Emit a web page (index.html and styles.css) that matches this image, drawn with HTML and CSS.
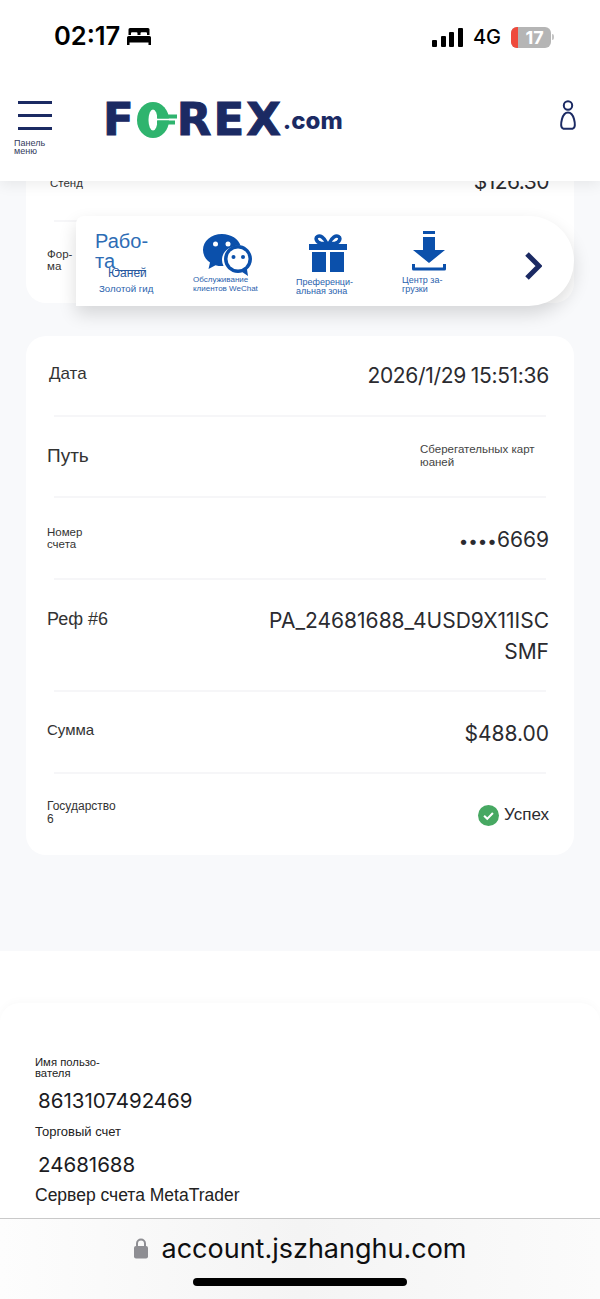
FILE: index.html
```html
<!DOCTYPE html>
<html lang="ru">
<head>
    <meta charset="UTF-8">
    <meta name="viewport" content="width=device-width, initial-scale=1.0">
    <title>FOREX.com</title>
    <link rel="stylesheet" href="styles.css">
</head>
<body>
    <!-- Status bar -->
    <div class="status-bar">
        <div class="status-left">
            <span class="clock">02:17</span>
            <svg class="bed" viewBox="0 0 24 17" width="24" height="17">
                <path fill="#000" d="M3 0h18a1.500 1.500 0 0 1 1.500 1.500V7H20V5.200a1 1 0 0 0-1-1h-4.500a1 1 0 0 0-1 1V7h-3V5.200a1 1 0 0 0-1-1H5a1 1 0 0 0-1 1V7H1.500V1.500A1.500 1.500 0 0 1 3 0zM1.500 8h21A1.500 1.500 0 0 1 24 9.500V17h-2.500v-2.500h-19V17H0V9.500A1.500 1.500 0 0 1 1.500 8z"/>
            </svg>
        </div>
        <div class="status-right">
            <div class="signal"><i></i><i></i><i></i><i></i></div>
            <span class="net">4G</span>
            <div class="battery"><span class="battery-low"></span><span class="battery-num">17</span></div>
            <span class="battery-cap"></span>
        </div>
    </div>

    <!-- Site header -->
    <header class="site-header">
        <div class="menu">
            <div class="burger"><i></i><i></i><i></i></div>
            <span class="menu-label">Панель меню</span>
        </div>
        <div class="logo">
            <span class="logo-text">F</span>
            <svg class="logo-o" viewBox="0 0 40 36" width="40" height="36">
                <ellipse cx="16" cy="18" rx="16" ry="18" fill="#2fb46e"/>
                <ellipse cx="16" cy="18" rx="4.500" ry="10.500" fill="#fff"/>
                <rect x="20" y="16.500" width="13" height="2" fill="#fff"/>
                <rect x="20" y="12.500" width="20" height="4" fill="#2fb46e"/>
                <rect x="20" y="18.500" width="18" height="4" fill="#2fb46e"/>
            </svg>
            <span class="logo-text">REX</span>
            <span class="logo-com">.com</span>
        </div>
        <svg class="user" viewBox="0 0 20 30" width="20" height="30">
            <circle cx="10" cy="5.500" r="4.200" fill="none" stroke="#1b2a63" stroke-width="2"/>
            <path fill="none" stroke="#1b2a63" stroke-width="2" d="M10 12.500c3.500 0 5 3 6 6.500 1.200 4.500 1.500 9-1.500 9.700h-9C2.500 28 2.800 23.500 4 19c1-3.500 2.500-6.500 6-6.500z"/>
        </svg>
    </header>

    <main class="content">
        <!-- Card scrolled under the header -->
        <section class="card card-top">
            <div class="row row-stand">
                <span class="label-sm">Стенд</span>
                <span class="value">$126.30</span>
            </div>
            <div class="row row-form">
                <span class="label-sm form-label">Фор-<br>ма</span>
            </div>
        </section>

        <!-- Floating shortcuts -->
        <nav class="quick-bar">
            <div class="quick-item quick-gold">
                <span class="gold-big">Рабо-<br>та</span>
                <span class="gold-sub">Юаней</span>
                <span class="gold-name">Золотой гид</span>
            </div>
            <div class="quick-item quick-wechat">
                <svg viewBox="0 0 50 44" width="50" height="44">
                    <path fill="#0b50ab" d="M20 1C9 1 1 8.300 1 17c0 5 2.600 9.400 7 12.500L6.500 36l7-3.800c2 .6 4.200.9 6.500.9h1.500C20.500 31 20 29 20 27c0-8.500 7.500-14.500 17-14.500h1.500C36.500 6 29 1 20 1z"/>
                    <path fill="#0b50ab" d="M36 12c-7.500 0-14 6.300-14 14s6.500 14 14 14c1.500 0 3-.2 4.500-.7L46 43l-1-6.500c3-2.500 5-6.300 5-10.500 0-7.700-6.500-14-14-14z"/>
                    <ellipse fill="#fff" cx="36" cy="26" rx="10.500" ry="10.500"/>
                    <circle fill="#fff" cx="13.500" cy="11" r="2.500"/>
                    <circle fill="#fff" cx="26" cy="11" r="2.500"/>
                    <circle fill="#0b50ab" cx="31.500" cy="24" r="2"/>
                    <circle fill="#0b50ab" cx="41" cy="24" r="2"/>
                </svg>
                <span class="quick-label">Обслуживание клиентов WeChat</span>
            </div>
            <div class="quick-item quick-gift">
                <svg viewBox="0 0 38 38" width="38" height="38">
                    <path fill="none" stroke="#0b50ab" stroke-width="3.500" d="M18 9.500C15 3 11 1 8.500 2.500 6 4 7 8 12 9.500zM20 9.500c3-6.500 7-8.500 9.500-7C32 4 31 8 26 9.500z"/>
                    <rect fill="#0b50ab" x="0" y="10" width="38" height="6"/>
                    <rect fill="#0b50ab" x="3" y="18" width="14" height="20"/>
                    <rect fill="#0b50ab" x="21" y="18" width="14" height="20"/>
                </svg>
                <span class="quick-label">Преференци-<br>альная зона</span>
            </div>
            <div class="quick-item quick-download">
                <svg viewBox="0 0 34 40" width="34" height="40">
                    <rect fill="#0b50ab" x="11" y="0" width="12" height="3"/>
                    <path fill="#0b50ab" d="M11 6h12v13h10L17 32 1 19h10z"/>
                    <path fill="none" stroke="#0b50ab" stroke-width="3" stroke-linejoin="round" d="M1.500 33v5h31v-5"/>
                </svg>
                <span class="quick-label">Центр за-<br>грузки</span>
            </div>
            <svg class="quick-next" viewBox="0 0 18 28" width="18" height="28">
                <path fill="none" stroke="#1b2a63" stroke-width="5" d="M3 2l12 12L3 26"/>
            </svg>
        </nav>

        <!-- Transaction details -->
        <section class="card card-details">
            <div class="row row-date">
                <span class="label-lg">Дата</span>
                <span class="value value-date">2026/1/29 15:51:36</span>
            </div>
            <div class="row row-path">
                <span class="label-xl">Путь</span>
                <span class="path-value">Сберегательных карт<br>юаней</span>
            </div>
            <div class="row row-account">
                <span class="label-sm">Номер<br>счета</span>
                <span class="value"><span class="dots">••••</span>6669</span>
            </div>
            <div class="row row-ref">
                <span class="label-lg">Реф #6</span>
                <span class="value">PA_24681688_4USD9X11ISC<br>SMF</span>
            </div>
            <div class="row row-sum">
                <span class="label-md">Сумма</span>
                <span class="value">$488.00</span>
            </div>
            <div class="row row-state">
                <span class="label-sm">Государство<br>6</span>
                <span class="state">
                    <svg viewBox="0 0 20 20" width="21" height="21">
                        <circle cx="10" cy="10" r="10" fill="#47a862"/>
                        <path fill="none" stroke="#fff" stroke-width="2" d="M5.800 10.300l3 2.900 5.400-5.600"/>
                    </svg>
                    Успех
                </span>
            </div>
        </section>
    </main>

    <!-- Account info -->
    <section class="account">
        <div class="account-card">
            <div class="acc-label">Имя пользо-<br>вателя</div>
            <div class="acc-value">8613107492469</div>
            <div class="acc-label acc-label-trade">Торговый счет</div>
            <div class="acc-value acc-value-trade">24681688</div>
            <div class="acc-server">Сервер счета MetaTrader</div>
        </div>
    </section>

    <!-- Browser address bar -->
    <footer class="url-bar">
        <div class="url">
            <svg viewBox="0 0 15 22" width="16" height="22">
                <path fill="none" stroke="#8e8e93" stroke-width="2" d="M3.500 10V6.500a4 4 0 0 1 8 0V10"/>
                <rect x="0.500" y="9" width="14" height="12.500" rx="2" fill="#8e8e93"/>
            </svg>
            <span>account.jszhanghu.com</span>
        </div>
        <div class="home-bar"></div>
    </footer>
</body>
</html>
```

FILE: styles.css
```css
:root {
    --navy: #1b2a63;
    --blue: #2a62ad;
    --page: #f8f9fb;
    --text: #2b2b30;
    --line: #f6f6f8;
}

* {
    margin: 0;
    padding: 0;
    box-sizing: border-box;
}

html, body {
    height: 1299px;
    overflow: hidden;
}

body {
    width: 600px;
    background: white;
    color: var(--text);
    font-family: 'Liberation Sans', Arial, sans-serif;
    display: flex;
    flex-direction: column;
}

/* status bar */
.status-bar {
    height: 72px;
    flex: none;
    display: flex;
    justify-content: space-between;
    align-items: flex-start;
    padding: 20px 46px 0 54px;
    background: white;
    color: black;
    position: relative;
    z-index: 3;
}

.status-left {
    display: flex;
    align-items: center;
    gap: 7px;
}

.clock {
    font-family: Inter, sans-serif;
    font-size: 25.500px;
    font-weight: 600;
    line-height: 32px;
}

.status-right {
    display: flex;
    align-items: center;
    height: 32px;
    margin-top: 1px;
}

.signal {
    display: flex;
    align-items: flex-end;
    gap: 3.500px;
    height: 19px;
    margin-right: 10px;
}

.signal i {
    display: block;
    width: 5px;
    border-radius: 1px;
    background: black;
}

.signal i:nth-child(1) { height: 7px; }
.signal i:nth-child(2) { height: 11px; }
.signal i:nth-child(3) { height: 15px; }
.signal i:nth-child(4) { height: 19px; }

.net {
    font-family: Inter, sans-serif;
    font-size: 20px;
    font-weight: 500;
    margin-right: 10px;
}

.battery {
    width: 40px;
    height: 21px;
    border-radius: 6px;
    background: #b5b5b5;
    overflow: hidden;
    display: flex;
}

.battery-low {
    width: 7px;
    background: #ef4a3c;
}

.battery-num {
    flex: 1;
    text-align: center;
    color: white;
    font-family: Inter, sans-serif;
    font-size: 18px;
    font-weight: 700;
    line-height: 21px;
}

.battery-cap {
    width: 2px;
    height: 6px;
    margin-left: 1px;
    border-radius: 0 2px 2px 0;
    background: #c4c4c4;
}

/* header */
.site-header {
    height: 109px;
    flex: none;
    background: white;
    box-shadow: 0 3px 14px rgba(0, 0, 0, 0.08);
    display: flex;
    align-items: flex-start;
    position: relative;
    z-index: 2;
}

.menu {
    width: 103px;
    flex: none;
    padding: 29px 0 0 14px;
}

.burger {
    width: 34px;
    margin-left: 4px;
    display: flex;
    flex-direction: column;
    gap: 10px;
}

.burger i {
    display: block;
    height: 3px;
    background: var(--navy);
}

.menu-label {
    display: block;
    width: 40px;
    margin-top: 10px;
    font-size: 9px;
    line-height: 7.500px;
    color: #333a5c;
}

.logo {
    display: flex;
    align-items: center;
    height: 36px;
    margin-top: 30px;
    color: var(--navy);
}

.logo-text {
    font-family: 'DejaVu Sans', sans-serif;
    font-size: 45px;
    font-weight: 700;
    line-height: 36px;
    letter-spacing: 2px;
    -webkit-text-stroke: 1px var(--navy);
}

.logo-o {
    margin: 0 0 0 1px;
}

.logo-com {
    font-family: Inter, sans-serif;
    font-size: 24px;
    font-weight: 800;
}

.user {
    margin: 28px 22px 0 auto;
}

/* main content */
.content {
    height: 770px;
    flex: none;
    background: var(--page);
    padding: 0 26px;
    position: relative;
    overflow: hidden;
}

.card {
    background: white;
    border-radius: 20px;
}

.row {
    display: flex;
    justify-content: space-between;
    align-items: center;
    position: relative;
    padding: 0 25px 0 21px;
}

.row + .row::before {
    content: "";
    position: absolute;
    top: 0;
    left: 28px;
    right: 28px;
    height: 2px;
    background: var(--line);
}

.card-top {
    height: 152px;
    margin-top: -30px;
    margin-bottom: 33px;
}

.row-stand {
    height: 69px;
    padding-top: 12px;
    padding-left: 24px;
    align-items: flex-start;
}

.row-stand .label-sm {
    margin-top: 14px;
}

.row-stand .value {
    margin-top: 3px;
    letter-spacing: -0.500px;
}

.row-form {
    height: 83px;
    padding-bottom: 4px;
}

.form-label {
    line-height: 12px;
}

.card-details {
    height: 519px;
}

.label-sm {
    font-size: 11.500px;
    line-height: 12px;
    color: #333;
}

.label-md {
    font-size: 15px;
    color: #333;
}

.label-lg {
    font-size: 17px;
    color: #333;
}

.label-xl {
    font-size: 19px;
    color: #333;
}

.value {
    font-family: Inter, sans-serif;
    font-size: 21px;
    line-height: 31px;
    text-align: right;
    color: var(--text);
}

.value-date {
    letter-spacing: -0.300px;
    word-spacing: -1px;
}

.dots {
    font-size: 17px;
}

.row-date { height: 79px; padding-left: 23px; }
.row-date .label-lg { margin-top: -3px; }

.row-path { height: 81px; }
.row-account { height: 82px; padding-top: 2px; }
.row-account .value { margin-top: 4px; }

.row-ref { height: 112px; padding-top: 2px; align-items: flex-start; }
.row-ref .label-lg { margin-top: 29px; font-size: 18px; }
.row-ref .value { margin-top: 25px; }

.row-sum { height: 82px; padding-top: 5px; }
.row-sum .label-md { margin-top: -9px; }

.row-state { height: 83px; padding-top: 3px; }
.row-state .label-sm { font-size: 12px; line-height: 13px; margin-top: -4px; }

.path-value {
    width: 129px;
    padding-top: 1px;
    font-size: 11.500px;
    line-height: 13px;
    color: #444;
}

.state {
    display: flex;
    align-items: center;
    gap: 5px;
    font-size: 17px;
}

/* floating shortcuts */
.quick-bar {
    position: absolute;
    top: 35px;
    left: 76px;
    width: 498px;
    height: 90px;
    background: white;
    border-radius: 8px 45px 45px 0;
    box-shadow: 0 8px 18px rgba(0, 0, 0, 0.14);
    display: flex;
    align-items: flex-start;
    z-index: 1;
}

.quick-item {
    display: flex;
    flex-direction: column;
    color: var(--blue);
}

.quick-label {
    display: block;
    font-size: 9px;
    line-height: 9px;
}

.quick-gold {
    width: 97px;
    padding: 15px 0 0 19px;
}

.gold-big {
    font-size: 20px;
    line-height: 20px;
    color: #2d6cb5;
}

/* the line over the word sits tight on the letters, overline is too high */
.gold-sub {
    align-self: flex-start;
    margin: -4px 0 0 13px;
    font-size: 12px;
    line-height: 13px;
    background: linear-gradient(#2a5aa0, #2a5aa0) no-repeat 7px 3px / 31px 1px;
    color: #2a5aa0;
}

.gold-name {
    margin: 3px 0 0 4px;
    font-size: 9.700px;
    line-height: 12px;
    white-space: nowrap;
}

.quick-wechat {
    width: 103px;
    margin-left: 20px;
    padding-top: 17px;
}

.quick-wechat svg {
    margin-left: 9px;
}

.quick-wechat .quick-label {
    font-size: 8px;
    width: 70px;
    margin-top: -2px;
}

.quick-gift {
    width: 106px;
    padding-top: 18px;
}

.quick-gift svg {
    margin-left: 13px;
}

.quick-gift .quick-label {
    margin-top: 6px;
}

.quick-download {
    width: 122px;
    padding-top: 15px;
}

.quick-download svg {
    margin-left: 10px;
}

.quick-download .quick-label {
    margin-top: 5px;
    line-height: 8.500px;
}

.quick-next {
    margin-top: 36px;
    flex: none;
}

/* account info */
.account {
    flex: 1;
    min-height: 0;
    padding-top: 52px;
    overflow: hidden;
}

.account-card {
    height: 240px;
    border-radius: 20px 20px 0 0;
    box-shadow: 0 -2px 8px rgba(0, 0, 0, 0.025);
    padding: 54px 35px 0;
}

.acc-label {
    font-size: 11.300px;
    line-height: 11px;
    color: #222;
}

.acc-label-trade {
    margin-top: 10px;
    font-size: 13px;
    line-height: 14px;
}

.acc-value {
    margin: 8px 0 0 3px;
    font-family: Inter, sans-serif;
    font-size: 20.500px;
    line-height: 28px;
    color: #1c1c1f;
}

.acc-value-trade {
    margin-top: 12px;
}

.acc-server {
    margin-top: 5px;
    font-size: 17.500px;
    line-height: 22px;
    color: #222;
}

/* address bar */
.url-bar {
    height: 81px;
    flex: none;
    position: relative;
    z-index: 2;
    border-top: 1px solid #c9c9c9;
    background: linear-gradient(90deg, #fdfdfd, #f4f4f4 50%, #fbfbfb);
    display: flex;
    flex-direction: column;
    align-items: center;
}

.url {
    display: flex;
    align-items: center;
    gap: 12px;
    margin-top: 13px;
    height: 32px;
    color: #0f0f10;
    font-family: Inter, sans-serif;
    font-size: 27px;
}

.home-bar {
    width: 214px;
    height: 8px;
    margin-top: 14px;
    border-radius: 4px;
    background: black;
}
```
